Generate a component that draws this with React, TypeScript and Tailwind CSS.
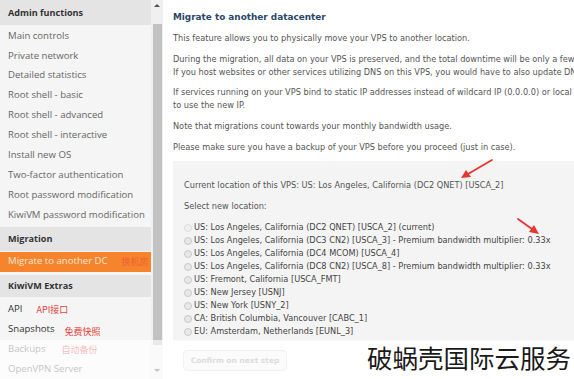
import React from "react";

const adminItems = [
  "Main controls",
  "Private network",
  "Detailed statistics",
  "Root shell - basic",
  "Root shell - advanced",
  "Root shell - interactive",
  "Install new OS",
  "Two-factor authentication",
  "Root password modification",
  "KiwiVM password modification",
];

const locations = [
  { t: "US: Los Angeles, California (DC2 QNET) [USCA_2] (current)", cur: true },
  { t: "US: Los Angeles, California (DC3 CN2) [USCA_3] - Premium bandwidth multiplier: 0.33x" },
  { t: "US: Los Angeles, California (DC4 MCOM) [USCA_4]" },
  { t: "US: Los Angeles, California (DC8 CN2) [USCA_8] - Premium bandwidth multiplier: 0.33x" },
  { t: "US: Fremont, California [USCA_FMT]" },
  { t: "US: New Jersey [USNJ]" },
  { t: "US: New York [USNY_2]" },
  { t: "CA: British Columbia, Vancouver [CABC_1]" },
  { t: "EU: Amsterdam, Netherlands [EUNL_3]" },
];

const side = { fontFamily: '"Open Sans", "Noto Sans CJK SC", sans-serif' };
const body = { fontFamily: '"DejaVu Sans", Verdana, sans-serif' };
const cjk = { fontFamily: '"Noto Sans CJK SC", sans-serif' };

function Header({ children, cls }: { children: React.ReactNode; cls: string }) {
  return (
    <div className={`bg-[#e4e4e4] pl-[8px] flex items-center font-bold text-[#333] text-[9.1px] ${cls}`}>
      {children}
    </div>
  );
}

function Item({ children, cls = "text-[#666]" }: { children: React.ReactNode; cls?: string }) {
  return <div className={`h-[20px] pl-[8px] flex items-center text-[9.6px] whitespace-nowrap ${cls}`}>{children}</div>;
}

export default function App() {
  return (
    <div className="relative w-[574px] h-[379px] overflow-hidden bg-white flex">
      <aside className="w-[151px] shrink-0 bg-[#f5f5f5] flex flex-col" style={side}>
        <Header cls="h-[25px]">Admin functions</Header>
        <div className="h-[1px]" />
        {adminItems.map((i) => (
          <Item key={i}>{i}</Item>
        ))}
        <Header cls="h-[24px] mt-[2px]">Migration</Header>
        <div className="h-[20px] mt-[1px] bg-[#f5842c] pl-[8px] flex items-center text-[9.6px] text-[#fde6d2] gap-[14px]">
          <span>Migrate to another DC</span>
          <span className="text-[9px] text-[#f0603a]" style={cjk}>换机房</span>
        </div>
        <Header cls="h-[23px] mt-[3px]">KiwiVM Extras</Header>
        <div className="h-[2px]" />
        <Item cls="text-[#333]">
          API
          <span className="ml-[14px] text-[9px] text-[#e8413c]" style={cjk}>API接口</span>
        </Item>
        <Item cls="text-[#333]">
          Snapshots
          <span className="ml-[10px] mt-[5px] text-[9px] text-[#e8413c]" style={cjk}>免费快照</span>
        </Item>
        <Item cls="text-[#555]">
          Backups
          <span className="ml-[16px] mt-[2px] text-[9px] text-[#e8413c]" style={cjk}>自动备份</span>
        </Item>
        <Item cls="text-[#555]">OpenVPN Server</Item>
      </aside>

      <div className="w-[12px] shrink-0 bg-[#f0f0f0] flex flex-col items-center">
        <div className="h-[24px] w-full flex justify-center pt-[4px]">
          <div className="w-0 h-0 border-l-[3px] border-r-[3px] border-b-[3px] border-l-transparent border-r-transparent border-b-[#505050]" />
        </div>
        <div className="w-[9px] h-[321px] bg-[#c1c1c1]" />
        <div className="flex-1" />
        <div className="h-[10px] w-full flex justify-center">
          <div className="w-0 h-0 border-l-[3px] border-r-[3px] border-t-[3px] border-l-transparent border-r-transparent border-t-[#505050]" />
        </div>
      </div>

      <main className="flex-1 min-w-0 pl-[10px] pt-[11px] text-[8.2px] leading-[13px] text-[#555] overflow-hidden" style={body}>
        <div className="text-[8.9px] font-bold text-[#2a4868] whitespace-nowrap">Migrate to another datacenter</div>
        <p className="mt-[8px] whitespace-nowrap">This feature allows you to physically move your VPS to another location.</p>
        <p className="mt-[8px] whitespace-nowrap">
          During the migration, all data on your VPS is preserved, and the total downtime will be only a few
          <br />
          If you host websites or other services utilizing DNS on this VPS, you would have to also update DN
        </p>
        <p className="mt-[7px] whitespace-nowrap">
          If services running on your VPS bind to static IP addresses instead of wildcard IP (0.0.0.0) or local
          <br />
          to use the new IP.
        </p>
        <p className="mt-[8px] whitespace-nowrap">Note that migrations count towards your monthly bandwidth usage.</p>
        <p className="mt-[8px] whitespace-nowrap">Please make sure you have a backup of your VPS before you proceed (just in case).</p>
        <div className="mt-[7px] bg-[#f4f4f4] pl-[11px] pt-[18px] pb-[2px] h-[180px]">
          <div className="whitespace-nowrap">Current location of this VPS: US: Los Angeles, California (DC2 QNET) [USCA_2]</div>
          <div className="mt-[8px] whitespace-nowrap">Select new location:</div>
          <div className="mt-[8px] flex flex-col">
            {locations.map((l) => (
              <div key={l.t} className="h-[13px] flex items-center whitespace-nowrap text-[#444]">
                <span
                  className={`w-[8px] h-[8px] rounded-full border mr-[2px] shrink-0 ${
                    l.cur ? "border-[#dcdcdc] bg-[#f0f0f0]" : "border-[#c8c8c8] bg-[#e8e8e8]"
                  }`}
                />
                {l.t}
              </div>
            ))}
          </div>
        </div>
        <div className="mt-[9px] ml-[10px] w-[104px] h-[21px] rounded-[4px] border border-[#d8d8d8] bg-[#f3f3f3] flex items-center justify-center text-[7.5px] font-bold text-[#999]">
          Confirm on next step
        </div>
      </main>

      <div className="absolute left-0 right-0 top-[340px] bottom-0 bg-white/65" />

      <div
        className="absolute left-[367px] top-[343px] text-[25.5px] leading-[28px] text-[#1a1a1a] whitespace-nowrap"
        style={cjk}
      >
        破蜗壳国际云服务
      </div>

      <svg className="absolute left-0 top-0 pointer-events-none" width="574" height="379">
        <line x1="492" y1="160" x2="468" y2="174" stroke="#e8352f" strokeWidth="1.8" strokeLinecap="round" />
        <polygon points="461,178 466,170 471,177" fill="#e8352f" />
        <line x1="518" y1="219" x2="532" y2="229" stroke="#e8352f" strokeWidth="1.8" strokeLinecap="round" />
        <polygon points="539,234 529,232 534,225" fill="#e8352f" />
      </svg>
    </div>
  );
}
